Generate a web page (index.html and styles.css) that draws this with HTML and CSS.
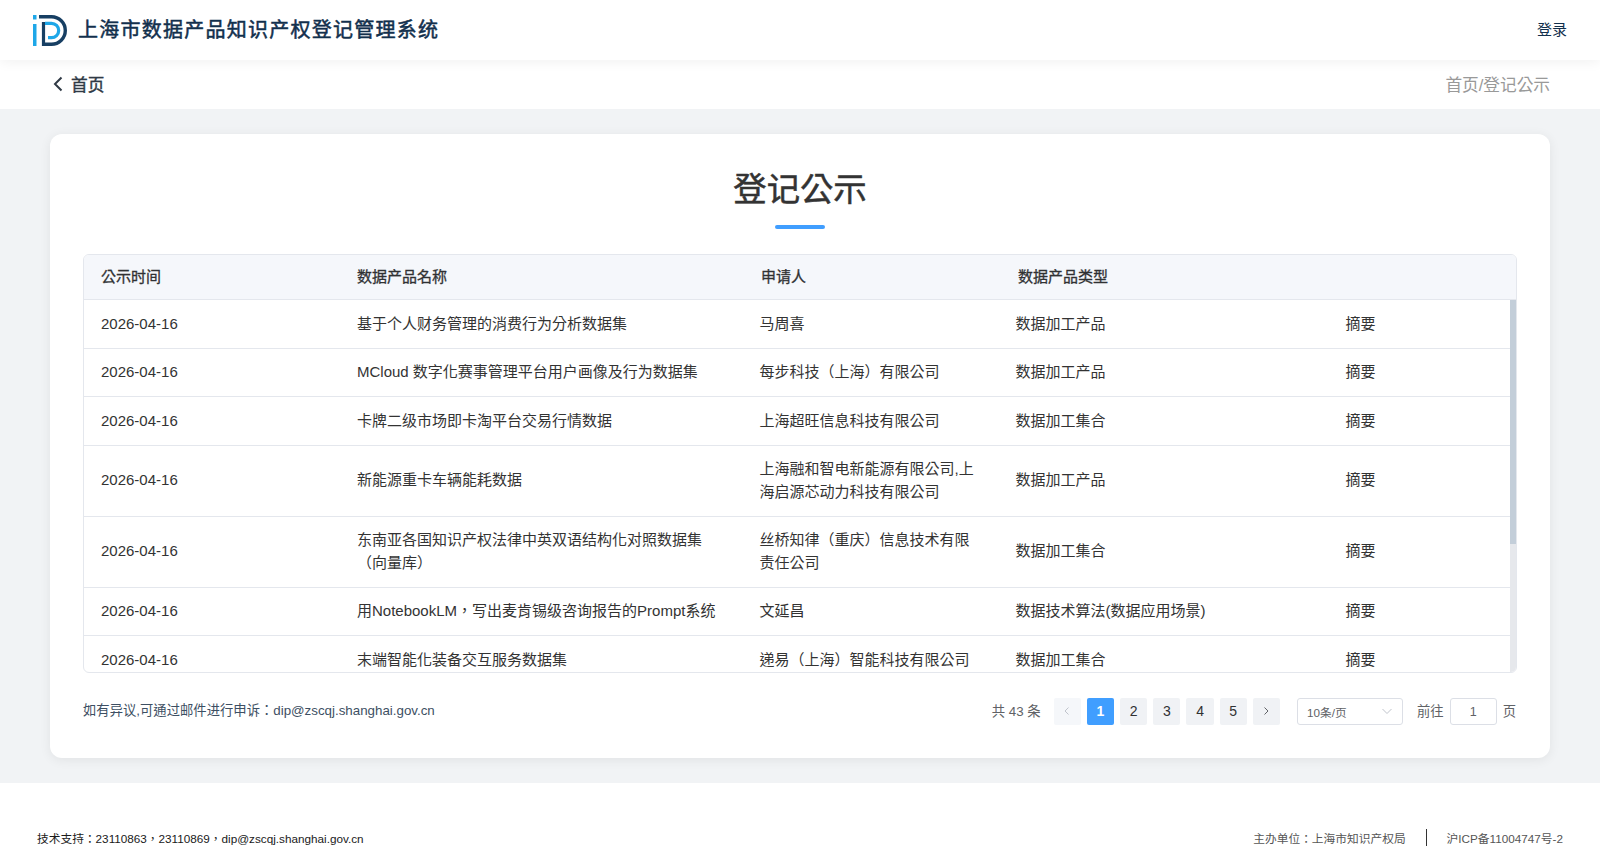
FILE: index.html
```html
<!DOCTYPE html>
<html>
<head>
    <meta charset="UTF-8">
    <title>上海市数据产品知识产权登记管理系统</title>
    <link rel="stylesheet" href="styles.css">
</head>
<body>
    <header class="top-bar">
        <div class="brand">
            <svg class="logo" viewBox="0 0 34 31" width="34" height="31">
                <rect x="0" y="0" width="3.5" height="4.5" fill="#1ea7e8"/>
                <rect x="0" y="9" width="3.5" height="22" fill="#1ea7e8"/>
                <path d="M6 1.7H18.5A13.8 13.8 0 0 1 18.5 29.3H9" fill="none" stroke="#173f63" stroke-width="3.4"/>
                <path d="M10.5 7V31" fill="none" stroke="#173f63" stroke-width="3.2"/>
                <path d="M12 8.3H18.5A7.2 7.2 0 0 1 18.5 22.7H15" fill="none" stroke="#1ea7e8" stroke-width="3.2"/>
            </svg>
            <span class="brand-name">上海市数据产品知识产权登记管理系统</span>
        </div>
        <a class="login">登录</a>
    </header>

    <div class="sub-bar">
        <a class="back">
            <svg viewBox="0 0 12 16" width="12" height="16"><path d="M9.5 1.5L3 8l6.5 6.5" fill="none" stroke="#303a45" stroke-width="2"/></svg>
            <span>首页</span>
        </a>
        <span class="crumb">首页/登记公示</span>
    </div>

    <main class="page">
        <section class="card">
            <h2 class="title">登记公示</h2>
            <div class="title-line"></div>

            <div class="table-wrap">
                <table class="head-table">
                    <colgroup>
                        <col class="h1"><col class="h2"><col class="h3"><col class="h4"><col>
                    </colgroup>
                    <thead>
                        <tr>
                            <th>公示时间</th>
                            <th>数据产品名称</th>
                            <th>申请人</th>
                            <th>数据产品类型</th>
                            <th></th>
                        </tr>
                    </thead>
                </table>
                <div class="table-body">
                    <table class="body-table">
                        <colgroup>
                            <col class="b1"><col class="b2"><col class="b3"><col class="b4"><col>
                        </colgroup>
                        <tbody>
                            <tr>
                                <td>2026-04-16</td>
                                <td>基于个人财务管理的消费行为分析数据集</td>
                                <td>马周喜</td>
                                <td>数据加工产品</td>
                                <td><a>摘要</a></td>
                            </tr>
                            <tr>
                                <td>2026-04-16</td>
                                <td>MCloud 数字化赛事管理平台用户画像及行为数据集</td>
                                <td>每步科技（上海）有限公司</td>
                                <td>数据加工产品</td>
                                <td><a>摘要</a></td>
                            </tr>
                            <tr>
                                <td>2026-04-16</td>
                                <td>卡牌二级市场即卡淘平台交易行情数据</td>
                                <td>上海超旺信息科技有限公司</td>
                                <td>数据加工集合</td>
                                <td><a>摘要</a></td>
                            </tr>
                            <tr>
                                <td>2026-04-16</td>
                                <td>新能源重卡车辆能耗数据</td>
                                <td>上海融和智电新能源有限公司,上海启源芯动力科技有限公司</td>
                                <td>数据加工产品</td>
                                <td><a>摘要</a></td>
                            </tr>
                            <tr>
                                <td>2026-04-16</td>
                                <td>东南亚各国知识产权法律中英双语结构化对照数据集（向量库）</td>
                                <td>丝桥知律（重庆）信息技术有限责任公司</td>
                                <td>数据加工集合</td>
                                <td><a>摘要</a></td>
                            </tr>
                            <tr>
                                <td>2026-04-16</td>
                                <td>用NotebookLM，写出麦肯锡级咨询报告的Prompt系统</td>
                                <td>文延昌</td>
                                <td>数据技术算法(数据应用场景)</td>
                                <td><a>摘要</a></td>
                            </tr>
                            <tr>
                                <td>2026-04-16</td>
                                <td>末端智能化装备交互服务数据集</td>
                                <td>递易（上海）智能科技有限公司</td>
                                <td>数据加工集合</td>
                                <td><a>摘要</a></td>
                            </tr>
                        </tbody>
                    </table>
                    <!-- scrollbar, the browser's own is hidden in the screenshot -->
                    <div class="scroll-track"><div class="scroll-thumb"></div></div>
                </div>
            </div>

            <div class="table-foot">
                <p class="notice">如有异议,可通过邮件进行申诉：dip@zscqj.shanghai.gov.cn</p>
                <div class="pager">
                    <span class="total">共 43 条</span>
                    <button class="pg pg-off">
                        <svg viewBox="0 0 10 10" width="10" height="10"><path d="M6.5 1.5L3 5l3.5 3.5" fill="none" stroke="#c0c4cc"/></svg>
                    </button>
                    <button class="pg pg-on">1</button>
                    <button class="pg">2</button>
                    <button class="pg">3</button>
                    <button class="pg">4</button>
                    <button class="pg">5</button>
                    <button class="pg">
                        <svg viewBox="0 0 10 10" width="10" height="10"><path d="M3.5 1.5L7 5 3.5 8.5" fill="none" stroke="#606266"/></svg>
                    </button>
                    <div class="size-select">
                        <span>10条/页</span>
                        <svg viewBox="0 0 12 12" width="12" height="12"><path d="M1.5 4L6 8.5 10.5 4" fill="none" stroke="#c0c4cc"/></svg>
                    </div>
                    <span class="jump">前往</span>
                    <div class="jump-input">1</div>
                    <span class="jump-unit">页</span>
                </div>
            </div>
        </section>
    </main>

    <footer class="footer">
        <span class="support">技术支持：23110863，23110869，dip@zscqj.shanghai.gov.cn</span>
        <div class="footer-right">
            <span>主办单位：上海市知识产权局</span>
            <i class="divider"></i>
            <span>沪ICP备11004747号-2</span>
        </div>
    </footer>
</body>
</html>
```

FILE: styles.css
```css
* {
    box-sizing: border-box;
}
body {
    margin: 0;
    font-family: "Liberation Sans", "Noto Sans CJK TC", sans-serif;
    color: #303133;
    background-color: #fff;
}
.top-bar {
    position: relative;
    z-index: 2;
    height: 60px;
    padding: 0 33px;
    display: flex;
    align-items: center;
    justify-content: space-between;
    background-color: #fff;
    box-shadow: 0 2px 12px rgba(0, 0, 0, 0.06);
}
.brand {
    display: flex;
    align-items: center;
}
.logo {
    display: block;
}
.brand-name {
    margin-left: 11px;
    margin-bottom: 3px;
    font-size: 20px;
    font-weight: 400;
    letter-spacing: 1.25px;
    -webkit-text-stroke: 0.5px #12304d;
    color: #12304d;
}
.login {
    margin-bottom: 3px;
    font-size: 15px;
    color: #12304d;
}
.sub-bar {
    height: 49px;
    padding: 0 50px 2px 52px;
    display: flex;
    align-items: center;
    justify-content: space-between;
    background-color: #fff;
}
.back {
    display: flex;
    align-items: center;
    font-size: 16.67px;
    font-weight: 400;
    -webkit-text-stroke: 0.4px #303a45;
    color: #303a45;
}
.back span {
    margin-left: 7px;
}
.crumb {
    font-size: 16.67px;
    color: #999;
}
.page {
    padding: 25px 50px;
    background-color: #f1f3f5;
}
.card {
    height: 624px;
    padding: 34px 33px 0;
    background-color: #fff;
    border-radius: 12px;
    box-shadow: 0 2px 12px rgba(0, 0, 0, 0.07);
}
.title {
    margin: 0;
    font-size: 33.33px;
    line-height: 44px;
    font-weight: 400;
    text-align: center;
    -webkit-text-stroke: 0.5px #333;
    color: #333;
}
.title-line {
    width: 50px;
    height: 4px;
    margin: 13px auto 25px;
    border-radius: 2px;
    background-color: #409eff;
}
.table-wrap {
    height: 419px;
    border: 1px solid #e4e7ed;
    border-radius: 6px;
    overflow: hidden;
}
table {
    width: 100%;
    table-layout: fixed;
    border-collapse: separate;
    border-spacing: 0;
    font-size: 15px;
}
.head-table th {
    height: 45px;
    padding: 0 0 4px 17px;
    text-align: left;
    font-weight: 400;
    -webkit-text-stroke: 0.3px #303133;
    color: #303133;
    background-color: #f5f7fb;
    border-bottom: 1px solid #e4e7ed;
}
.h1 { width: 256px; }
.h2 { width: 404px; }
.h3 { width: 257px; }
.h4 { width: 331px; }
.b1 { width: 256px; }
.b2 { width: 402.5px; }
.b3 { width: 256px; }
.b4 { width: 330px; }
.table-body {
    position: relative;
    height: 372px;
    padding-right: 6px;
    overflow: hidden;
}
.scroll-track {
    position: absolute;
    top: 0;
    right: 0;
    bottom: 0;
    width: 6px;
    background-color: #e6e8ec;
}
.scroll-thumb {
    height: 244px;
    background-color: #c3ced9;
}
.body-table td {
    padding: 12.5px 17px;
    line-height: 1.5;
    color: #333;
    border-bottom: 1px solid #e4e7ed;
}
.table-foot {
    height: 73px;
    display: flex;
    align-items: center;
    justify-content: space-between;
}
.notice {
    margin: 0;
    font-size: 13.33px;
    color: #3d4f63;
}
.pager {
    margin-top: 4px;
    padding-right: 1px;
    display: flex;
    align-items: center;
    font-size: 13.33px;
    color: #606266;
}
.total,
.jump,
.jump-unit {
    margin-bottom: 3px;
}
.total {
    margin-right: 13px;
}
.pg {
    width: 27.2px;
    height: 27px;
    margin-right: 6px;
    padding: 0 0 1px;
    display: flex;
    align-items: center;
    justify-content: center;
    border: 0;
    border-radius: 2px;
    font-family: inherit;
    font-size: 14px;
    color: #303133;
    background-color: #f0f2f5;
}
.pg-off {
    background-color: #f5f7fa;
}
.pg-on {
    font-weight: 700;
    color: #fff;
    background-color: #409eff;
}
.size-select {
    width: 106px;
    height: 27px;
    margin-left: 11px;
    margin-right: 14px;
    padding: 0 9px 1px;
    display: flex;
    align-items: center;
    justify-content: space-between;
    border: 1px solid #dcdfe6;
    border-radius: 3px;
    font-size: 11.7px;
    color: #606266;
}
.jump-input {
    width: 47px;
    height: 27px;
    margin: 0 6px 0 6px;
    padding-top: 1px;
    display: flex;
    align-items: center;
    justify-content: center;
    border: 1px solid #dcdfe6;
    border-radius: 3px;
    font-size: 12.5px;
}
.footer {
    height: 78px;
    padding: 30px 37px 0;
    display: flex;
    align-items: center;
    justify-content: space-between;
    font-size: 11.73px;
    background-color: #fff;
}
.support {
    color: #1a1a1a;
}
.footer-right {
    display: flex;
    align-items: center;
    color: #555;
}
.divider {
    width: 1px;
    height: 17px;
    margin: 0 20px;
    background-color: #333;
}
```
